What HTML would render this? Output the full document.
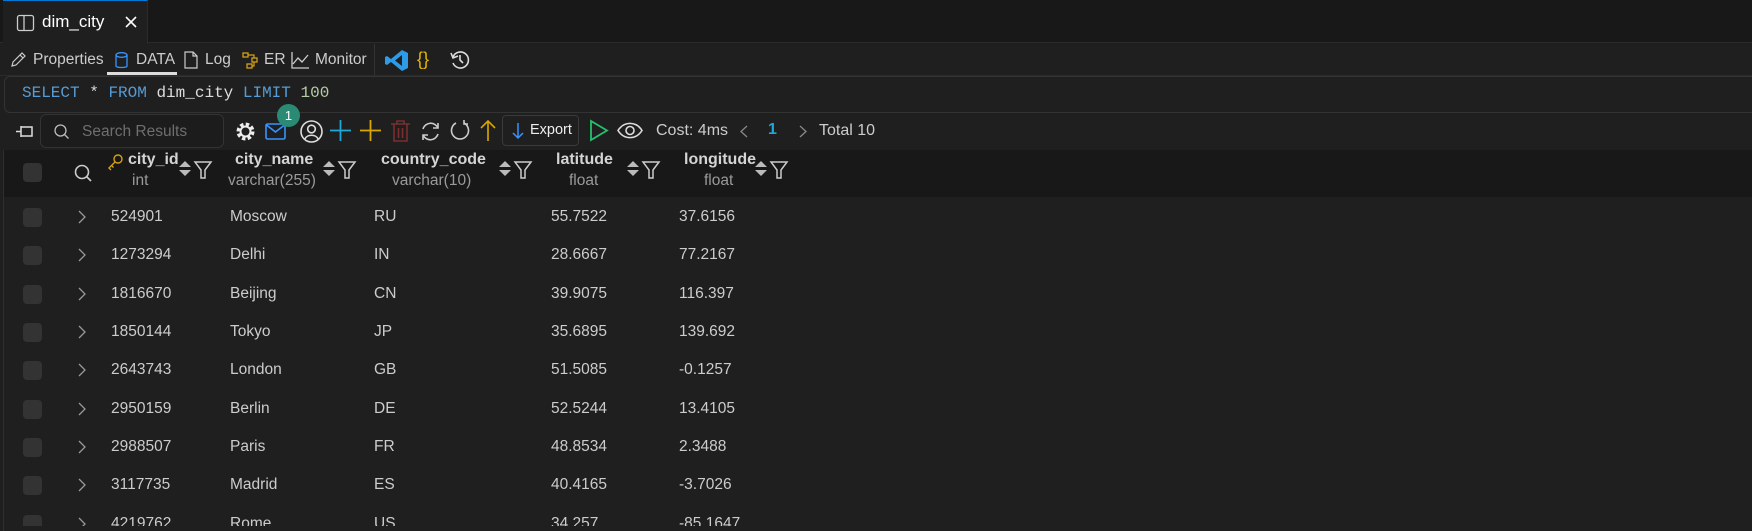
<!DOCTYPE html>
<html><head><meta charset="utf-8"><style>
*{margin:0;padding:0;box-sizing:border-box}
body{width:1752px;height:531px;background:#1f1f1f;font-family:"Liberation Sans",sans-serif;color:#cccccc;position:relative;overflow:hidden}
.a{position:absolute;white-space:nowrap}
svg{position:absolute;overflow:visible}
.row{position:absolute;left:4px;right:0;height:38px;font-size:15.5px}
.row span{position:absolute;top:10px}
.row svg{left:74px;top:12px}
.cb{position:absolute;left:19px;top:10px;width:19px;height:19px;border-radius:4px;background:#333}
.hd{font-weight:bold;font-size:16px;color:#d4d4d4}
.ty{font-size:15.5px;color:#9a9a9a}
</style></head><body>
<div class="a" style="left:0;top:0;width:1752px;height:43px;background:#181818;border-bottom:1px solid #2b2b2b"></div>
<div class="a" style="left:3px;top:0;width:145px;height:44px;background:#1f1f1f;border-top:1px solid #0078d4;border-right:1px solid #2b2b2b"></div>
<svg style="left:17px;top:15px" width="18" height="16"><rect x="0.5" y="0.5" width="16" height="15" rx="2" fill="none" stroke="#ccc" stroke-width="1.3"/><line x1="7" y1="1" x2="7" y2="15" stroke="#ccc" stroke-width="1.3"/></svg>
<div class="a" style="left:42px;top:12px;font-size:17px;color:#fff">dim_city</div>
<svg style="left:125px;top:16px" width="12" height="12"><path d="M1 1L11 11M11 1L1 11" stroke="#fff" stroke-width="1.6"/></svg>
<svg style="left:10px;top:52px" width="16" height="16"><path d="M2 14L3 10L12 1L15 4L6 13Z M10 3L13 6" fill="none" stroke="#ccc" stroke-width="1.2"/></svg>
<div class="a" style="left:33px;top:51px;font-size:15.5px">Properties</div>
<svg style="left:115px;top:52px" width="13" height="17"><ellipse cx="6.5" cy="3" rx="5.5" ry="2.3" fill="none" stroke="#3794ff" stroke-width="1.3"/><path d="M1 3V14C1 16 12 16 12 14V3" fill="none" stroke="#3794ff" stroke-width="1.3"/></svg>
<div class="a" style="left:136px;top:51px;font-size:15.5px">DATA</div>
<div class="a" style="left:107px;top:72px;width:70px;height:3px;background:#ddd"></div>
<svg style="left:184px;top:51px" width="14" height="18"><path d="M1 1H9L13 5V17H1Z M9 1V5H13" fill="none" stroke="#ccc" stroke-width="1.2"/></svg>
<div class="a" style="left:205px;top:51px;font-size:15.5px">Log</div>
<svg style="left:242px;top:52px" width="17" height="17"><rect x="1" y="1" width="5" height="4" fill="none" stroke="#d4a017" stroke-width="1.3"/><rect x="10" y="6" width="5" height="4" fill="none" stroke="#d4a017" stroke-width="1.3"/><rect x="5" y="12" width="5" height="4" fill="none" stroke="#d4a017" stroke-width="1.3"/><path d="M6 3H12V6M12 10V14H10" fill="none" stroke="#d4a017" stroke-width="1.2"/></svg>
<div class="a" style="left:264px;top:51px;font-size:15.5px">ER</div>
<svg style="left:291px;top:52px" width="18" height="17"><path d="M1 0V16H18 M2 12L7 6L11 10L17 3" fill="none" stroke="#ccc" stroke-width="1.3"/></svg>
<div class="a" style="left:315px;top:51px;font-size:15.5px">Monitor</div>
<div class="a" style="left:374px;top:44px;width:1px;height:31px;background:#333"></div>
<svg style="left:385px;top:49px" width="24" height="23"><path d="M17 1L23 4V19L17 22L6 13L2 16L0 15V8L2 7L6 10Z M17 6L10 11.5L17 17Z" fill="#2d9be8" fill-rule="evenodd"/></svg>
<div class="a" style="left:417px;top:49px;font-size:18px;color:#e6b800">{}</div>
<svg style="left:450px;top:50px" width="20" height="20"><path d="M3 7A8 8 0 1 1 3 13" fill="none" stroke="#ddd" stroke-width="1.6"/><path d="M1 3L3 8L8 6" fill="none" stroke="#ddd" stroke-width="1.6"/><path d="M10 5V10L13 13" fill="none" stroke="#ddd" stroke-width="1.6"/></svg>
<div class="a" style="left:0;top:75px;width:1752px;height:1px;background:#2b2b2b"></div>
<div class="a" style="left:4px;top:76px;width:1760px;height:37px;border:1px solid #333;border-radius:6px;background:#1f1f1f"></div>
<div class="a" style="left:22px;top:84px;font-family:'Liberation Mono',monospace;font-size:16px"><span style="color:#569cd6">SELECT</span> <span style="color:#ddd">*</span> <span style="color:#569cd6">FROM</span> <span style="color:#ddd">dim_city</span> <span style="color:#569cd6">LIMIT</span> <span style="color:#b5cea8">100</span></div>
<svg style="left:15px;top:124px" width="19" height="15"><path d="M1 7.5H6 M6 2V13 M6 3H17V12H6" fill="none" stroke="#ddd" stroke-width="1.5"/></svg>
<div class="a" style="left:40px;top:114px;width:184px;height:34px;border:1px solid #333;border-radius:6px;background:#1c1c1c"></div>
<svg style="left:54px;top:124px" width="16" height="16"><circle cx="6.5" cy="6.5" r="5.5" fill="none" stroke="#bbb" stroke-width="1.3"/><path d="M10.5 10.5L14.5 14.5" stroke="#bbb" stroke-width="1.3"/></svg>
<div class="a" style="left:82px;top:123px;font-size:15.5px;color:#6e6e6e">Search Results</div>
<svg style="left:235px;top:121px" width="21" height="21"><circle cx="10.5" cy="10.5" r="7" fill="none" stroke="#eee" stroke-width="4" stroke-dasharray="3.3 2.2"/><circle cx="10.5" cy="10.5" r="5" fill="none" stroke="#eee" stroke-width="2"/></svg>
<svg style="left:265px;top:123px" width="21" height="17"><rect x="1" y="1" width="19" height="15" rx="1.5" fill="none" stroke="#3794ff" stroke-width="1.6"/><path d="M1.5 2L10.5 9L19.5 2" fill="none" stroke="#3794ff" stroke-width="1.6"/></svg>
<div class="a" style="left:277px;top:104px;width:23px;height:23px;border-radius:50%;background:#2a8a74;color:#fff;font-size:13px;text-align:center;line-height:23px">1</div>
<svg style="left:300px;top:120px" width="23" height="23"><circle cx="11.5" cy="11.5" r="10.5" fill="none" stroke="#ddd" stroke-width="1.6"/><circle cx="11.5" cy="9" r="3.8" fill="none" stroke="#ddd" stroke-width="1.6"/><path d="M5 19C7 14 16 14 18 19" fill="none" stroke="#ddd" stroke-width="1.6"/></svg>
<svg style="left:330px;top:120px" width="21" height="21"><path d="M10.5 0V21M0 10.5H21" stroke="#1ea7d8" stroke-width="1.8"/></svg>
<svg style="left:360px;top:120px" width="21" height="21"><path d="M10.5 0V21M0 10.5H21" stroke="#d9a700" stroke-width="1.8"/></svg>
<svg style="left:391px;top:120px" width="19" height="22"><path d="M0 4H19M6 4V1H13V4M3 4V21H16V4M7.5 8V18M11.5 8V18" fill="none" stroke="#7a2e2e" stroke-width="1.6"/></svg>
<svg style="left:420px;top:121px" width="21" height="21"><path d="M3 8A8 8 0 0 1 18 7M18 13A8 8 0 0 1 3 14" fill="none" stroke="#ccc" stroke-width="1.6"/><path d="M18 2V7H13M3 19V14H8" fill="none" stroke="#ccc" stroke-width="1.6"/></svg>
<svg style="left:450px;top:120px" width="21" height="22"><path d="M14 3A8.5 8.5 0 1 1 6 3" fill="none" stroke="#ccc" stroke-width="1.6"/><path d="M14 0V4H18" fill="none" stroke="#ccc" stroke-width="1.6"/></svg>
<svg style="left:480px;top:120px" width="16" height="21"><path d="M8 1V21M1 8L8 1L15 8" fill="none" stroke="#d9a700" stroke-width="1.6"/></svg>
<div class="a" style="left:502px;top:115px;width:77px;height:31px;border:1px solid #3a3a3a;border-radius:4px"></div>
<svg style="left:512px;top:123px" width="12" height="16"><path d="M6 0V15M1 10L6 15L11 10" fill="none" stroke="#3794ff" stroke-width="1.5"/></svg>
<div class="a" style="left:530px;top:122px;font-size:14.5px;color:#eee">Export</div>
<svg style="left:590px;top:120px" width="18" height="21"><path d="M1 1L17 10.5L1 20Z" fill="none" stroke="#23c16b" stroke-width="1.8"/></svg>
<svg style="left:617px;top:122px" width="26" height="17"><path d="M1 8.5C7 -1 19 -1 25 8.5C19 18 7 18 1 8.5Z" fill="none" stroke="#ddd" stroke-width="1.6"/><circle cx="13" cy="8.5" r="4" fill="none" stroke="#ddd" stroke-width="1.6"/></svg>
<div class="a" style="left:656px;top:122px;font-size:16px;color:#ccc">Cost: 4ms</div>
<svg style="left:740px;top:125px" width="8" height="13"><path d="M7 1L1 6.5L7 12" fill="none" stroke="#888" stroke-width="1.3"/></svg>
<div class="a" style="left:768px;top:121px;font-size:16px;color:#1ea7d8;font-weight:bold">1</div>
<svg style="left:799px;top:125px" width="8" height="13"><path d="M1 1L7 6.5L1 12" fill="none" stroke="#888" stroke-width="1.3"/></svg>
<div class="a" style="left:819px;top:122px;font-size:16px;color:#ccc">Total 10</div>
<div class="a" style="left:4px;top:150px;width:1752px;height:47px;background:#181818"></div>
<div class="a" style="left:3px;top:150px;width:1px;height:381px;background:#2e2e2e"></div>
<div class="cb" style="top:163px;left:23px"></div>
<svg style="left:74px;top:164px" width="18" height="19"><circle cx="8" cy="8" r="6.5" fill="none" stroke="#ccc" stroke-width="1.6"/><path d="M12.5 12.5L17 17" stroke="#ccc" stroke-width="1.6"/></svg>
<svg style="left:108px;top:154px" width="15" height="16"><circle cx="10" cy="5" r="4" fill="none" stroke="#d4a017" stroke-width="1.4"/><path d="M7 8L1 14L3 16M3.5 11.5L5.5 13.5" fill="none" stroke="#d4a017" stroke-width="1.4"/></svg>
<div class="a hd" style="left:128px;top:151px">city_id</div>
<div class="a ty" style="left:132px;top:172px">int</div>
<div class="a hd" style="left:235px;top:151px">city_name</div>
<div class="a ty" style="left:228px;top:172px">varchar(255)</div>
<div class="a hd" style="left:381px;top:151px">country_code</div>
<div class="a ty" style="left:392px;top:172px">varchar(10)</div>
<div class="a hd" style="left:556px;top:151px">latitude</div>
<div class="a ty" style="left:569px;top:172px">float</div>
<div class="a hd" style="left:684px;top:151px">longitude</div>
<div class="a ty" style="left:704px;top:172px">float</div>
<svg style="left:0;top:0" width="1752" height="531">
<g fill="#bbb"><path d="M179 167L185 161L191 167Z M179 170L185 176L191 170Z"/><path d="M323 167L329 161L335 167Z M323 170L329 176L335 170Z"/><path d="M499 167L505 161L511 167Z M499 170L505 176L511 170Z"/><path d="M627 167L633 161L639 167Z M627 170L633 176L639 170Z"/><path d="M755 167L761 161L767 167Z M755 170L761 176L767 170Z"/></g>
<g fill="none" stroke="#ccc" stroke-width="1.5"><path d="M195 162H211L205 170V178H201V170Z"/><path d="M339 162H355L349 170V178H345V170Z"/><path d="M515 162H531L525 170V178H521V170Z"/><path d="M643 162H659L653 170V178H649V170Z"/><path d="M771 162H787L781 170V178H777V170Z"/></g>
</svg>
<div class="row" style="top:198px"><div class="cb"></div><svg width="8" height="14"><path d="M1 1L7 7L1 13" fill="none" stroke="#999" stroke-width="1.3"/></svg><span style="left:107px">524901</span><span style="left:226px">Moscow</span><span style="left:370px">RU</span><span style="left:547px">55.7522</span><span style="left:675px">37.6156</span></div>
<div class="row" style="top:236px"><div class="cb"></div><svg width="8" height="14"><path d="M1 1L7 7L1 13" fill="none" stroke="#999" stroke-width="1.3"/></svg><span style="left:107px">1273294</span><span style="left:226px">Delhi</span><span style="left:370px">IN</span><span style="left:547px">28.6667</span><span style="left:675px">77.2167</span></div>
<div class="row" style="top:275px"><div class="cb"></div><svg width="8" height="14"><path d="M1 1L7 7L1 13" fill="none" stroke="#999" stroke-width="1.3"/></svg><span style="left:107px">1816670</span><span style="left:226px">Beijing</span><span style="left:370px">CN</span><span style="left:547px">39.9075</span><span style="left:675px">116.397</span></div>
<div class="row" style="top:313px"><div class="cb"></div><svg width="8" height="14"><path d="M1 1L7 7L1 13" fill="none" stroke="#999" stroke-width="1.3"/></svg><span style="left:107px">1850144</span><span style="left:226px">Tokyo</span><span style="left:370px">JP</span><span style="left:547px">35.6895</span><span style="left:675px">139.692</span></div>
<div class="row" style="top:351px"><div class="cb"></div><svg width="8" height="14"><path d="M1 1L7 7L1 13" fill="none" stroke="#999" stroke-width="1.3"/></svg><span style="left:107px">2643743</span><span style="left:226px">London</span><span style="left:370px">GB</span><span style="left:547px">51.5085</span><span style="left:675px">-0.1257</span></div>
<div class="row" style="top:390px"><div class="cb"></div><svg width="8" height="14"><path d="M1 1L7 7L1 13" fill="none" stroke="#999" stroke-width="1.3"/></svg><span style="left:107px">2950159</span><span style="left:226px">Berlin</span><span style="left:370px">DE</span><span style="left:547px">52.5244</span><span style="left:675px">13.4105</span></div>
<div class="row" style="top:428px"><div class="cb"></div><svg width="8" height="14"><path d="M1 1L7 7L1 13" fill="none" stroke="#999" stroke-width="1.3"/></svg><span style="left:107px">2988507</span><span style="left:226px">Paris</span><span style="left:370px">FR</span><span style="left:547px">48.8534</span><span style="left:675px">2.3488</span></div>
<div class="row" style="top:466px"><div class="cb"></div><svg width="8" height="14"><path d="M1 1L7 7L1 13" fill="none" stroke="#999" stroke-width="1.3"/></svg><span style="left:107px">3117735</span><span style="left:226px">Madrid</span><span style="left:370px">ES</span><span style="left:547px">40.4165</span><span style="left:675px">-3.7026</span></div>
<div class="row" style="top:505px;height:21px;overflow:hidden"><div class="cb"></div><svg width="8" height="14"><path d="M1 1L7 7L1 13" fill="none" stroke="#999" stroke-width="1.3"/></svg><span style="left:107px">4219762</span><span style="left:226px">Rome</span><span style="left:370px">US</span><span style="left:547px">34.257</span><span style="left:675px">-85.1647</span></div>
</body></html>
